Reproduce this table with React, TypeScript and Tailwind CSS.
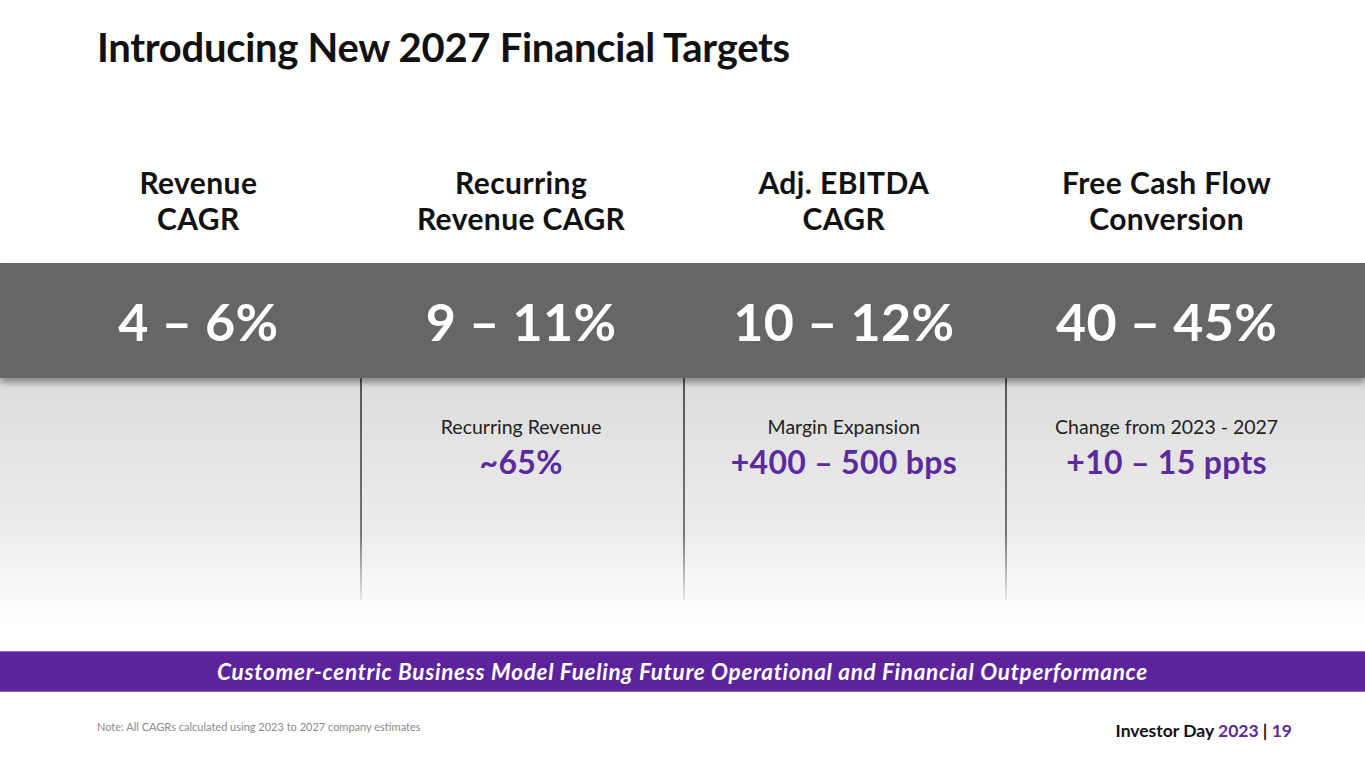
const font = "font-['Lato','Open_Sans',sans-serif]";

type Target = {
  label: string[];
  value: string;
  subLabel?: string;
  subValue?: string;
};

const targets: Target[] = [
  { label: ["Revenue", "CAGR"], value: "4 – 6%" },
  {
    label: ["Recurring", "Revenue CAGR"],
    value: "9 – 11%",
    subLabel: "Recurring Revenue",
    subValue: "~65%",
  },
  {
    label: ["Adj. EBITDA", "CAGR"],
    value: "10 – 12%",
    subLabel: "Margin Expansion",
    subValue: "+400 – 500 bps",
  },
  {
    label: ["Free Cash Flow", "Conversion"],
    value: "40 – 45%",
    subLabel: "Change from 2023 - 2027",
    subValue: "+10 – 15 ppts",
  },
];

export default function App() {
  return (
    <div className={`relative h-[768px] w-[1365px] overflow-hidden bg-white text-black ${font}`}>
      {/* title */}
      <h1 className="pl-[97px] pt-[24px] text-[40px] font-bold leading-[46px] tracking-[-0.3px] text-[#111]">
        Introducing New 2027 Financial Targets
      </h1>

      {/* column headers */}
      <div className="mt-[94px] grid grid-cols-4 px-[37px]">
        {targets.map((t) => (
          <div key={t.value} className="text-center text-[30px] font-bold leading-[36px] tracking-[0.4px] text-[#111]">
            {t.label.map((l) => (
              <div key={l}>{l}</div>
            ))}
          </div>
        ))}
      </div>

      {/* grey value band */}
      <div className="relative z-10 mt-[27px] h-[115px] bg-[#666666] shadow-[0_5px_6px_rgba(0,0,0,0.35)]">
        <div className="grid h-full grid-cols-4 items-center px-[37px]">
          {targets.map((t) => (
            <div key={t.value} className="text-center text-[52px] font-bold leading-none tracking-[0.3px] text-white">
              {t.value}
            </div>
          ))}
        </div>
      </div>

      {/* detail area */}
      <div className="h-[273px] bg-gradient-to-b from-[#dcdcdc] via-[#ececec] via-55% to-white to-90%">
        <div className="grid h-full grid-cols-4 px-[37px]">
          {targets.map((t, i) => (
            <div key={t.value} className="relative flex flex-col items-center pt-[37px]">
              {i > 0 && (
                <div className="absolute left-0 top-0 h-[222px] w-[2px] bg-gradient-to-b from-[#555] via-[#777] via-70% to-[#e8e8e8]" />
              )}
              {t.subLabel && (
                <>
                  <div className="text-[19.5px] leading-[24px] text-[#222]">{t.subLabel}</div>
                  <div className="mt-[5px] text-[32px] font-bold leading-[36px] tracking-[0.3px] text-[#5b2a9c]">
                    {t.subValue}
                  </div>
                </>
              )}
            </div>
          ))}
        </div>
      </div>

      {/* purple banner */}
      <div className="flex h-[41px] items-center justify-center border-y border-[#8a66c2] bg-[#5c239b]">
        <span className="text-[22.5px] font-bold italic tracking-[0.7px] text-white">
          Customer-centric Business Model Fueling Future Operational and Financial Outperformance
        </span>
      </div>

      {/* footer */}
      <div className="flex items-start justify-between pl-[97px] pr-[73px] pt-[28px]">
        <span className="text-[11px] leading-[14px] text-[#8a8a8a]">
          Note: All CAGRs calculated using 2023 to 2027 company estimates
        </span>
        <span className="text-[17.5px] font-bold leading-[22px] text-[#111]">
          Investor Day <span className="text-[#5b2a9c]">2023</span> | <span className="text-[#5b2a9c]">19</span>
        </span>
      </div>
    </div>
  );
}
